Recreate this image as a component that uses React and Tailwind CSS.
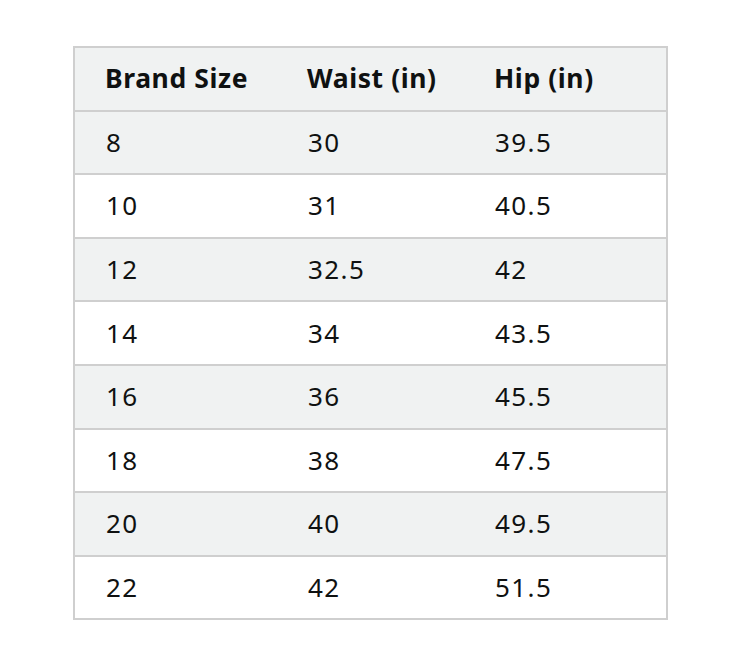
const ROWS = [
  ['8', '30', '39.5'],
  ['10', '31', '40.5'],
  ['12', '32.5', '42'],
  ['14', '34', '43.5'],
  ['16', '36', '45.5'],
  ['18', '38', '47.5'],
  ['20', '40', '49.5'],
  ['22', '42', '51.5'],
];

const COLS = 'grid grid-cols-[202px_187px_1fr] items-center';

export default function App() {
  return (
    <div className="min-h-[654px] bg-white pt-[46px] pl-[73px] font-['Noto_Sans',sans-serif] text-[#0f1111]">
      <div className="w-[595px] border-2 border-[#cfcfcf]">
        <div className={`${COLS} h-[61.6px] bg-[#f0f2f2] text-[26.5px] font-bold tracking-[0.6px]`}>
          <div className="pl-[30px]">Brand Size</div>
          <div className="pl-[30px]">Waist (in)</div>
          <div className="pl-[30px]">Hip (in)</div>
        </div>
        {ROWS.map((r, i) => (
          <div
            key={r[0]}
            className={`${COLS} h-[63.6px] border-t-2 border-[#cfcfcf] text-[26px] tracking-[1.4px] ${
              i % 2 === 0 ? 'bg-[#f0f2f2]' : 'bg-white'
            }`}
          >
            <div className="pl-[31px]">{r[0]}</div>
            <div className="pl-[31px]">{r[1]}</div>
            <div className="pl-[31px]">{r[2]}</div>
          </div>
        ))}
      </div>
    </div>
  );
}
